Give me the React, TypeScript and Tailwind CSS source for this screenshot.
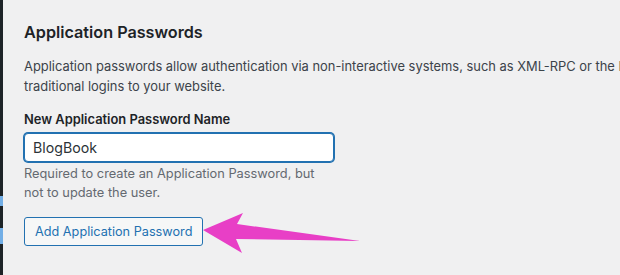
import React from "react";

export default function App() {
  return (
    <div className="relative flex h-[275px] w-[620px] overflow-hidden bg-[#f0f0f1] font-['Inter','Liberation_Sans',sans-serif]">
      {/* admin menu edge */}
      <div className="flex w-[3px] shrink-0 flex-col bg-[#1d2327]">
        <div className="h-[196px]" />
        <div className="h-[10px] bg-[#72aee6]" />
        <div className="h-[22px]" />
        <div className="h-[16px] bg-[#72aee6]" />
      </div>

      <div className="flex-1 pl-[21px] pt-[20px]">
        <h2 className="text-[16.2px] leading-[24px] font-semibold text-[#1d2327]">Application Passwords</h2>

        <p className="mt-[13px] whitespace-nowrap text-[12.9px] leading-[20px] text-[#3c434a]">
          Application passwords allow authentication via non-interactive systems, such as XML-RPC or the REST API, without providing your actual password.
          <br />
          traditional logins to your website.
        </p>

        <label className="mt-[13px] block text-[12.9px] leading-[20px] font-semibold text-[#1d2327]">
          New Application Password Name
        </label>
        <input
          type="text"
          defaultValue="BlogBook"
          className="mt-[3px] block h-[29px] w-[310px] rounded-[4px] border border-[#2271b1] bg-white px-[8px] text-[14.2px] text-[#2c3338] shadow-[0_0_0_1px_#2271b1] outline-none"
        />
        <p className="mt-[2px] w-[300px] text-[12.8px] leading-[19px] text-[#646970]">
          Required to create an Application Password, but not to update the user.
        </p>

        <button className="mt-[15px] block h-[29px] rounded-[3px] border border-[#2271b1] bg-[#f6f7f7] pl-[10px] pr-[10px] text-[12.7px] text-[#2271b1]">
          Add Application Password
        </button>
      </div>

      {/* annotation arrow */}
      <svg width="620" height="275" viewBox="0 0 620 275" className="pointer-events-none absolute left-0 top-0">
        <polygon points="203,230 243,213 237,224 360,241 236,239 242,253" fill="#e83fc6" />
      </svg>
    </div>
  );
}
